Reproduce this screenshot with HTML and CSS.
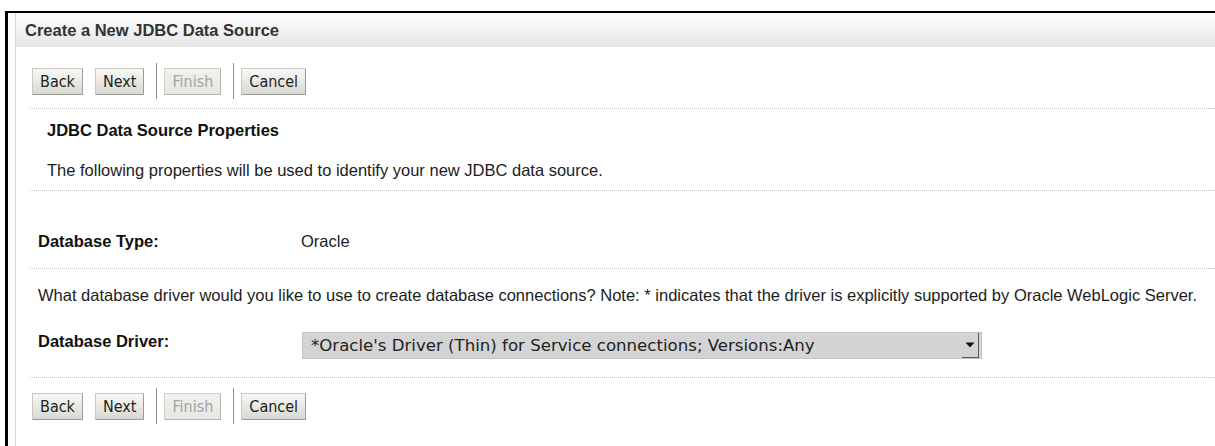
FILE: index.html
```html
<!DOCTYPE html>
<html lang="en">
<head>
<meta charset="utf-8">
<title>Create a New JDBC Data Source</title>
<link rel="stylesheet" href="styles.css">
</head>
<body>
<div class="frame">
  <div class="panel">
    <div class="title-bar">Create a New JDBC Data Source</div>
    <div class="content">
      <div class="toolbar toolbar-top">
        <button class="btn">Back</button>
        <button class="btn btn-next">Next</button>
        <span class="sep"></span>
        <button class="btn" disabled>Finish</button>
        <span class="sep"></span>
        <button class="btn">Cancel</button>
      </div>

      <div class="section intro">
        <h2 class="section-title">JDBC Data Source Properties</h2>
        <p class="section-desc">The following properties will be used to identify your new JDBC data source.</p>
      </div>

      <div class="section type-row">
        <div class="field">
          <span class="field-label">Database Type:</span>
          <span class="field-value">Oracle</span>
        </div>
      </div>

      <div class="section driver">
        <p class="driver-note">What database driver would you like to use to create database connections? Note: * indicates that the driver is explicitly supported by Oracle WebLogic Server.</p>
        <div class="field field-driver">
          <span class="field-label">Database Driver:</span>
          <div class="select">
            <span class="select-text">*Oracle's Driver (Thin) for Service connections; Versions:Any</span>
            <span class="select-arrow">
              <svg width="10" height="8" viewBox="0 0 10 8"><path d="M0.5 1.5h9L5 6.5z" fill="#111"/></svg>
            </span>
          </div>
        </div>
      </div>

      <div class="toolbar toolbar-bottom">
        <button class="btn">Back</button>
        <button class="btn btn-next">Next</button>
        <span class="sep"></span>
        <button class="btn" disabled>Finish</button>
        <span class="sep"></span>
        <button class="btn">Cancel</button>
      </div>
    </div>
  </div>
</div>
</body>
</html>
```
FILE: styles.css
```css
html, body {
  margin: 0;
  padding: 0;
  background: #fff;
  overflow: hidden;
}

body {
  font-family: "Liberation Sans", Arial, sans-serif;
  font-size: 16.5px;
  color: #1c1c1c;
}

/* outer window frame */
.frame {
  margin: 11px 0 0 5px;
  border-top: 2px solid #000;
  border-left: 3px solid #000;
  padding-left: 7px;
  height: 440px;
}

.panel {
  border-left: 1px solid #d6d6d6;
  height: 100%;
}

.title-bar {
  height: 34px;
  line-height: 34px;
  padding-left: 9px;
  font-weight: bold;
  font-size: 16.5px;
  color: #333;
  background: linear-gradient(#fdfdfd, #f3f4f3 40%, #e5e6e5);
}

.content {
  padding-left: 14px;
}

/* wizard buttons */
.toolbar {
  display: flex;
  align-items: center;
  height: 36px;
  padding-left: 2px;
}

.toolbar-top {
  padding-top: 16px;
  padding-bottom: 9px;
  border-bottom: 1px dotted #c2c2c2;
}

.toolbar-bottom {
  padding-top: 10px;
}

.btn {
  height: 27px;
  margin: 0;
  padding: 0 7px;
  font-family: "DejaVu Sans Condensed", "DejaVu Sans", sans-serif;
  font-stretch: condensed;
  font-size: 16px;
  color: #1e1e1e;
  background: linear-gradient(#f7f7f4, #e9e9e4 50%, #d9d9d2);
  border: 1px solid;
  border-color: #c9c9c2 #9c9c96 #9c9c96 #c9c9c2;
  border-radius: 1px;
}

.btn + .btn {
  margin-left: 12px;
}

.btn:disabled {
  color: #a3a3a3;
  background: linear-gradient(#f1f1ee, #e6e6e2);
  border-color: #cfcfca #b4b4ae #b4b4ae #cfcfca;
}

.sep {
  width: 1px;
  height: 36px;
  background: #8c8c8c;
  margin: 0 7px 0 12px;
}

/* form sections */
.section {
  border-bottom: 1px dotted #c2c2c2;
}

.intro {
  padding: 11px 0 10px 17px;
}

.section-title {
  margin: 0;
  font-size: 16.5px;
  line-height: 20px;
  font-weight: bold;
  color: #111;
}

.section-desc {
  margin: 20px 0 0;
  line-height: 20px;
}

.type-row {
  padding: 40px 0 17px 8px;
}

.field {
  display: flex;
  align-items: flex-start;
  line-height: 20px;
}

.field-label {
  width: 263px;
  flex: none;
  font-weight: bold;
  color: #111;
}

.driver {
  padding: 16px 0 18px 8px;
}

.driver-note {
  margin: 0;
  line-height: 20px;
}

.field-driver {
  margin-top: 27px;
}

.field-driver .field-label {
  margin-top: -1px;
}

/* driver drop-down */
.select {
  display: flex;
  align-items: stretch;
  width: 680px;
  height: 27px;
  box-sizing: border-box;
  margin-left: 1px;
  background: #d4d4d4;
  border: 1px solid #c3c3c3;
}

.select-text {
  flex: 1;
  padding-left: 8px;
  font-family: "DejaVu Sans", sans-serif;
  font-size: 16.6px;
  line-height: 25px;
  color: #222;
  white-space: nowrap;
}

.select-arrow {
  width: 16px;
  margin: 0 2px 0 0;
  display: flex;
  align-items: center;
  justify-content: center;
  border-right: 1px solid #5a5a5a;
  border-bottom: 1px solid #5a5a5a;
}
```
